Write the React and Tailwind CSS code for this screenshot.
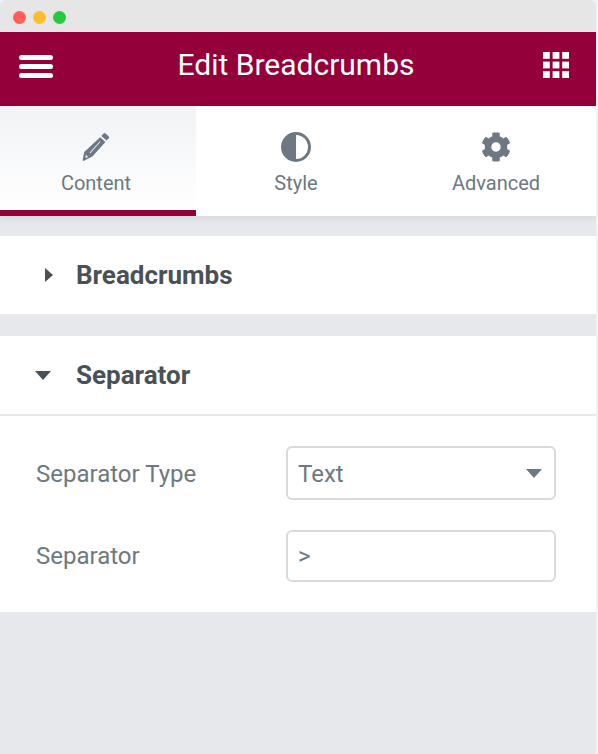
import { useState } from 'react';

function PencilIcon() {
    return (
        <svg width="30" height="30" viewBox="0 0 30 30" fill="#6d7882">
            <path d="M22.6 1.6 C23.2 1.1 24 1.1 24.6 1.6 L27.6 4.2 C28.2 4.8 28.2 5.6 27.7 6.2 L25.6 8.6 L20.4 4 Z" />
            <path fillRule="evenodd" d="M19.2 5.3 L24.4 9.9 L11.4 24.6 L2.4 29 L1.6 28.3 L3.2 19.9 Z M18.8 9.2 L8.6 20.8 L9.2 21.4 L19.4 9.8 Z M5 22.2 L4.4 26 L7.6 25 L5.8 24 Z" />
        </svg>
    );
}

function ContrastIcon() {
    return (
        <svg width="30" height="30" viewBox="0 0 30 30" fill="none">
            <circle cx="15" cy="15" r="13.5" stroke="#6d7882" strokeWidth="3" />
            <path d="M15 1.5 A13.5 13.5 0 0 0 15 28.5 Z" fill="#6d7882" />
        </svg>
    );
}

function GearIcon() {
    return (
        <svg width="30" height="30" viewBox="0 0 512 512" fill="#6d7882">
            <path d="M487.4 315.7l-42.6-24.6c4.3-23.2 4.3-47 0-70.2l42.6-24.6c4.9-2.8 7.1-8.6 5.5-14-11.1-35.6-30-67.8-54.7-94.6-3.8-4.1-10-5.1-14.8-2.3L380.8 110c-17.9-15.4-38.5-27.3-60.8-35.1V25.8c0-5.6-3.9-10.5-9.4-11.7-36.7-8.2-74.3-7.8-109.2 0-5.5 1.2-9.4 6.1-9.4 11.7V75c-22.2 7.9-42.8 19.8-60.8 35.1L88.7 85.5c-4.9-2.8-11-1.9-14.8 2.3-24.7 26.7-43.6 58.9-54.7 94.6-1.7 5.4.6 11.2 5.5 14L67.3 221c-4.3 23.2-4.3 47 0 70.2l-42.6 24.6c-4.9 2.8-7.1 8.6-5.5 14 11.1 35.6 30 67.8 54.7 94.6 3.8 4.1 10 5.1 14.8 2.3l42.6-24.6c17.9 15.4 38.5 27.3 60.8 35.1v49.2c0 5.6 3.9 10.5 9.4 11.7 36.7 8.2 74.3 7.8 109.2 0 5.5-1.2 9.4-6.1 9.4-11.7v-49.2c22.2-7.9 42.8-19.8 60.8-35.1l42.6 24.6c4.9 2.8 11 1.9 14.8-2.3 24.7-26.7 43.6-58.9 54.7-94.6 1.5-5.5-.7-11.3-5.6-14.1zM256 336c-44.1 0-80-35.9-80-80s35.9-80 80-80 80 35.9 80 80-35.9 80-80 80z" />
        </svg>
    );
}

function HeaderGrid() {
    return (
        <svg width="26" height="26" viewBox="0 0 26 26" fill="#fff" className="mb-[4px]">
            <rect x="0" y="0" width="6.8" height="6.8" />
            <rect x="9.6" y="0" width="6.8" height="6.8" />
            <rect x="19.2" y="0" width="6.8" height="6.8" />
            <rect x="0" y="9.6" width="6.8" height="6.8" />
            <rect x="9.6" y="9.6" width="6.8" height="6.8" />
            <rect x="19.2" y="9.6" width="6.8" height="6.8" />
            <rect x="0" y="19.2" width="6.8" height="6.8" />
            <rect x="9.6" y="19.2" width="6.8" height="6.8" />
            <rect x="19.2" y="19.2" width="6.8" height="6.8" />
        </svg>
    );
}

function App() {
    const [tab] = useState('Content');

    const tabs = [
        { name: 'Content', icon: <PencilIcon /> },
        { name: 'Style', icon: <ContrastIcon /> },
        { name: 'Advanced', icon: <GearIcon /> },
    ];

    return (
        <div className="h-[754px] w-[598px] overflow-hidden bg-[#f1f3f5] font-['Roboto',sans-serif]">
            <div className="h-[754px] w-[596px] overflow-hidden rounded-t-[6px] bg-[#e6e8eb]">
                {/* Window bar */}
                <div className="flex h-[32px] items-center gap-[7px] bg-[#e6e6e6] pl-[13px] pt-[2px]">
                    <span className="h-[13px] w-[13px] rounded-full bg-[#ff5f57]" />
                    <span className="h-[13px] w-[13px] rounded-full bg-[#ffbd2e]" />
                    <span className="h-[13px] w-[13px] rounded-full bg-[#28c940]" />
                </div>

                {/* Header */}
                <div className="flex h-[74px] items-center justify-between bg-[#93003a] pl-[19px] pr-[27px] pb-[5px]">
                    <div className="flex w-[34px] flex-col gap-[4px]">
                        <span className="h-[5px] rounded-full bg-white" />
                        <span className="h-[5px] rounded-full bg-white" />
                        <span className="h-[5px] rounded-full bg-white" />
                    </div>
                    <h1 className="mb-[3px] mr-[4px] text-[30px] leading-[36px] text-white">Edit Breadcrumbs</h1>
                    <HeaderGrid />
                </div>

                {/* Tabs */}
                <div className="flex h-[110px] bg-white shadow-[0_2px_8px_rgba(0,0,0,0.08)]">
                    {tabs.map((t) => (
                        <div
                            key={t.name}
                            className={
                                t.name === tab
                                    ? 'flex w-[196px] flex-col items-center border-b-[6px] border-[#93003a] bg-gradient-to-b from-[#f1f3f5] to-white pr-[4px] pt-[26px]'
                                    : 'flex w-[200px] flex-col items-center pt-[26px]'
                            }
                        >
                            {t.icon}
                            <span className="mt-[8px] text-[20px] leading-[26px] text-[#6d7882]">{t.name}</span>
                        </div>
                    ))}
                </div>

                {/* Breadcrumbs section */}
                <div className="mt-[20px] flex h-[78px] items-center bg-white">
                    <svg width="8" height="14" viewBox="0 0 8 14" fill="#495157" className="ml-[45px] mr-[23px]">
                        <path d="M0 0 L8 7 L0 14 Z" />
                    </svg>
                    <span className="text-[26px] leading-[30px] font-bold text-[#495157]">Breadcrumbs</span>
                </div>

                {/* Separator section */}
                <div className="mt-[22px] bg-white">
                    <div className="flex h-[80px] items-center border-b-2 border-[#e6e8eb]">
                        <svg width="16" height="9" viewBox="0 0 16 9" fill="#495157" className="ml-[35px] mr-[25px]">
                            <path d="M0 0 L16 0 L8 9 Z" />
                        </svg>
                        <span className="text-[26px] leading-[30px] font-bold text-[#495157]">Separator</span>
                    </div>
                    <div className="flex h-[196px] flex-col px-[36px] pt-[30px]">
                        <div className="flex items-center">
                            <label className="mt-[2px] w-[250px] text-[24px] leading-[28px] text-[#6d7882]">Separator Type</label>
                            <div className="flex h-[54px] w-[270px] items-center justify-between rounded-[6px] border-2 border-[#d5dadf] pl-[10px] pr-[12px]">
                                <span className="mt-[2px] text-[24px] text-[#6d7882]">Text</span>
                                <svg width="16" height="9" viewBox="0 0 16 9" fill="#6d7882">
                                    <path d="M0 0 L16 0 L8 9 Z" />
                                </svg>
                            </div>
                        </div>
                        <div className="mt-[30px] flex items-center">
                            <label className="w-[250px] text-[24px] leading-[28px] text-[#6d7882]">Separator</label>
                            <div className="flex h-[52px] w-[270px] items-center rounded-[6px] border-2 border-[#d5dadf] pl-[10px]">
                                <span className="text-[24px] text-[#6d7882]">&gt;</span>
                            </div>
                        </div>
                    </div>
                </div>
            </div>
        </div>
    );
}

export default App;
